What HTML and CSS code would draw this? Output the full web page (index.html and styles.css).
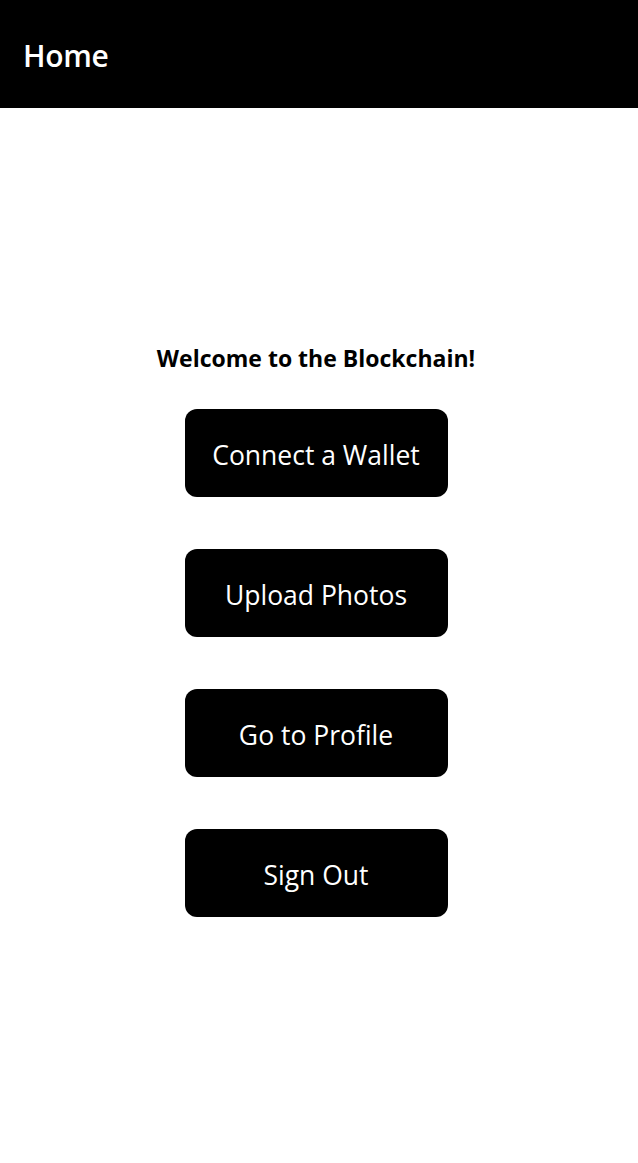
FILE: index.html
```html
<!DOCTYPE html>
<html>
<head>
<meta charset="utf-8">
<link rel="stylesheet" href="styles.css">
</head>
<body>
<header class="topbar"><h1 class="title">Home</h1></header>
<main class="content">
  <h2 class="welcome">Welcome to the Blockchain!</h2>
  <button class="btn">Connect a Wallet</button>
  <button class="btn">Upload Photos</button>
  <button class="btn">Go to Profile</button>
  <button class="btn">Sign Out</button>
</main>
</body>
</html>
```
FILE: styles.css
```css
html, body { margin: 0; padding: 0; background: #fff; }
body {
  font-family: "Open Sans", "Noto Sans", sans-serif;
  height: 1163px;
  display: flex;
  flex-direction: column;
}
.topbar {
  background: #000;
  height: 108px;
  display: flex;
  align-items: center;
  padding: 3px 23px 0;
  box-sizing: border-box;
  flex: none;
}
.title {
  margin: 0;
  color: #fff;
  font-size: 30px;
  font-weight: 600;
  letter-spacing: -0.3px;
}
.content {
  flex: 1;
  display: flex;
  flex-direction: column;
  align-items: center;
  justify-content: center;
  padding: 0 6px 12px 0;
}
.welcome {
  margin: 0 0 36px;
  font-size: 23px;
  font-weight: 700;
  color: #000;
  line-height: 30px;
}
.btn {
  width: 263px;
  height: 88px;
  background: #000;
  color: #fff;
  border: none;
  border-radius: 12px;
  font-family: inherit;
  font-size: 26.5px;
  padding: 4px 0 0;
  margin-bottom: 52px;
}
.btn:last-child { margin-bottom: 0; }
```
